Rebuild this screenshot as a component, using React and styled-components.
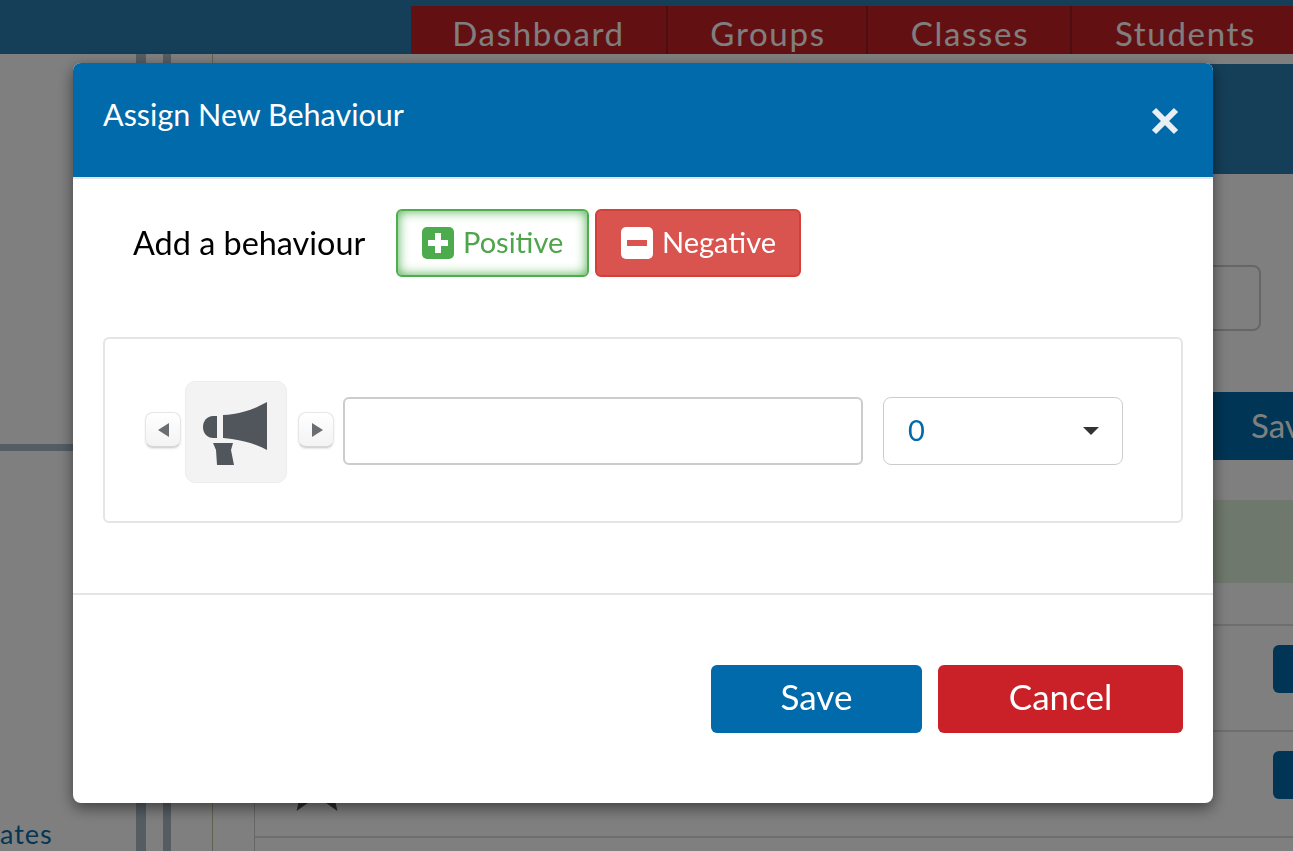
import React from 'react';
import styled, { createGlobalStyle } from 'styled-components';

const GlobalStyle = createGlobalStyle`
  * {
    box-sizing: border-box;
  }
  html,
  body {
    margin: 0;
    height: 100%;
    overflow: hidden;
    background: #fff;
    font-family: 'Lato', 'Liberation Sans', sans-serif;
  }
`;

const Page = styled.div`
  height: 851px;
  overflow: hidden;
  display: flex;
  flex-direction: column;
`;

const TopBar = styled.header`
  flex: none;
  height: 54px;
  padding: 6px 0 0 411px;
  background: #2a7eb2;
  display: flex;
`;

const Tab = styled.a`
  flex: none;
  width: ${({ $width }) => $width}px;
  height: 48px;
  padding-left: ${({ $shift }) => $shift || 0}px;
  background: #c62127;
  border-right: 2px solid #9c1a1f;
  color: #fff;
  font-size: 33px;
  line-height: 54px;
  letter-spacing: 1.7px;
  text-align: center;
`;

const Body = styled.div`
  flex: 1;
  min-height: 0;
  display: flex;
`;

const Sidebar = styled.aside`
  flex: none;
  width: 136px;
  padding-top: 390px;
  display: flex;
  flex-direction: column;
`;

const SidebarRule = styled.div`
  height: 7px;
  background: #aabbc6;
`;

const SidebarLink = styled.a`
  margin-top: auto;
  color: #0b6ea8;
  font-size: 27px;
  line-height: 34px;
  letter-spacing: 1px;
`;

const Rail = styled.div`
  flex: none;
  width: ${({ $width }) => $width}px;
  margin-right: ${({ $gap }) => $gap}px;
  background: #aabbc6;
`;

const Main = styled.main`
  flex: none;
  width: 1081px;
  border-left: 1px solid #b9c9a0;
  padding-top: 10px;
  display: flex;
  flex-direction: column;
`;

const SubHeader = styled.div`
  flex: none;
  height: 110px;
  background: #2a7eb2;
`;

const FormInput = styled.div`
  flex: none;
  height: 66px;
  margin: 91px 32px 0 0;
  border: 2px solid #ccc;
  border-radius: 8px;
`;

const SaveBar = styled.a`
  flex: none;
  height: 68px;
  margin-top: 61px;
  padding-left: 1038px;
  background: #006aab;
  color: #fff;
  font-size: 33px;
  line-height: 66px;
  white-space: nowrap;
`;

const Notice = styled.div`
  flex: none;
  height: 83px;
  margin-top: 40px;
  background: #dff0d8;
`;

const Table = styled.div`
  flex: 1;
  margin: 41px 0 0 41px;
  border-left: 1px solid #ccc;
`;

const Row = styled.div`
  height: 106px;
  border-top: 2px solid #ddd;
  padding: 10px 0 0 27px;
  display: flex;
  justify-content: space-between;
`;

const RowStar = styled.svg`
  width: 70px;
  height: 70px;
  margin-top: 2px;
  fill: #555;
`;

const RowButton = styled.div`
  width: 60px;
  height: 48px;
  margin: 9px -40px 0 0;
  border-radius: 6px;
  background: #006aab;
`;

const Overlay = styled.div`
  position: fixed;
  inset: 0;
  background: rgba(0, 0, 0, 0.5);
  display: flex;
  align-items: flex-start;
  padding: 63px 0 0 73px;
`;

const Modal = styled.section`
  width: 1140px;
  height: 740px;
  background: #fff;
  border-radius: 8px;
  box-shadow: 0 5px 15px rgba(0, 0, 0, 0.5);
  overflow: hidden;
  display: flex;
  flex-direction: column;
`;

const ModalHeader = styled.header`
  flex: none;
  height: 116px;
  padding: 0 33px 0 30px;
  background: #006aab;
  border-bottom: 2px solid #e5e5e5;
  display: flex;
  justify-content: space-between;
`;

const ModalTitle = styled.h4`
  margin: 31px 0 0;
  color: #fff;
  font-size: 30.5px;
  font-weight: 400;
  line-height: 40px;
`;

const CloseButton = styled.button`
  width: 30px;
  height: 30px;
  margin-top: 44px;
  padding: 0;
  border: 0;
  background: none;
  color: #e9eff3;
`;

const ModalBody = styled.div`
  flex: none;
  height: 416px;
  padding: 30px 30px 0;
  border-bottom: 2px solid #e5e5e5;
`;

const TypeRow = styled.div`
  height: 68px;
  padding-left: 30px;
  display: flex;
  align-items: center;
`;

const TypeLabel = styled.label`
  width: 263px;
  margin-bottom: 2px;
  color: #000;
  font-size: 32.4px;
`;

const TypeButton = styled.button`
  height: 68px;
  width: ${({ $width }) => $width}px;
  margin-right: 6px;
  padding: 0 0 0 24px;
  border: 2px solid ${({ $negative }) => ($negative ? '#d43f3a' : '#4cae4c')};
  border-radius: 6px;
  background: ${({ $negative }) => ($negative ? '#d9534f' : '#fff')};
  box-shadow: ${({ $negative }) => ($negative ? 'none' : 'inset 0 0 12px #4cae4c')};
  color: ${({ $negative }) => ($negative ? '#fff' : '#4ea54c')};
  font-family: inherit;
  font-size: 29px;
  line-height: 30px;
  display: flex;
  align-items: center;
  gap: 9px;
`;

const TypeText = styled.span`
  margin-bottom: 3px;
`;

const TypeIcon = styled.svg`
  flex: none;
  width: 32px;
  height: 32px;
`;

const Panel = styled.div`
  height: 186px;
  margin-top: 60px;
  padding: 42px 0 0 40px;
  border: 2px solid #e5e5e5;
  border-radius: 6px;
  display: flex;
  align-items: flex-start;
`;

const ArrowButton = styled.button`
  flex: none;
  width: 36px;
  height: 36px;
  margin-top: 31px;
  padding: 0 0 0 ${({ $next }) => ($next ? '3px' : '0')};
  border: 1px solid #e6e6e6;
  border-bottom: 2px solid #d6d6d6;
  border-radius: 8px;
  background: linear-gradient(#fff, #f3f3f3);
  box-shadow: 0 1px 2px rgba(0, 0, 0, 0.1);
  display: flex;
  align-items: center;
  justify-content: center;
`;

const ArrowGlyph = styled.span`
  width: 0;
  height: 0;
  border-top: 7px solid transparent;
  border-bottom: 7px solid transparent;
  border-right: ${({ $left }) => ($left ? '11px solid #6b6e70' : '0')};
  border-left: ${({ $left }) => ($left ? '0' : '11px solid #6b6e70')};
`;

const IconBox = styled.div`
  flex: none;
  width: 102px;
  height: 102px;
  margin: 0 11px 0 4px;
  border: 1px solid #ececec;
  border-radius: 10px;
  background: #f3f3f3;
`;

const MegaphoneIcon = styled.svg`
  display: block;
  width: 100px;
  height: 100px;
  fill: #50565c;
  filter: blur(0.4px);
`;

const BehaviourInput = styled.input`
  flex: none;
  width: 520px;
  height: 68px;
  margin: 16px 20px 0 9px;
  border: 2px solid #ccc;
  border-radius: 6px;
  background: #fff;
  font-family: inherit;
  font-size: 28px;
`;

const PointsSelect = styled.div`
  flex: none;
  width: 240px;
  height: 68px;
  margin-top: 16px;
  padding: 0 23px 0 24px;
  border: 1px solid #ccc;
  border-radius: 8px;
  color: #006aab;
  font-size: 29px;
  display: flex;
  align-items: center;
  justify-content: space-between;
`;

const PointsValue = styled.span`
  margin-bottom: 3px;
`;

const Caret = styled.span`
  width: 0;
  height: 0;
  border-top: 8px solid #333;
  border-left: 8px solid transparent;
  border-right: 8px solid transparent;
`;

const ModalFooter = styled.footer`
  flex: 1;
  padding: 70px 30px 0 0;
  display: flex;
  justify-content: flex-end;
  gap: 16px;
`;

const FooterButton = styled.button`
  width: ${({ $width }) => $width}px;
  height: 68px;
  padding: 0 0 6px;
  border: 0;
  border-radius: 6px;
  background: ${({ $danger }) => ($danger ? '#c92127' : '#006aab')};
  color: #fff;
  font-family: inherit;
  font-size: 35px;
`;

const starPoints = '12,1 15,9 23,9 17,14 19,23 12,18 5,23 7,14 1,9 9,9';

const App = () => (
  <>
    <GlobalStyle />
    <Page>
      <TopBar>
        <Tab $width={257}>Dashboard</Tab>
        <Tab $width={200} $shift={2}>Groups</Tab>
        <Tab $width={204} $shift={2}>Classes</Tab>
        <Tab $width={229}>Students</Tab>
      </TopBar>
      <Body>
        <Sidebar>
          <SidebarRule />
          <SidebarLink>ates</SidebarLink>
        </Sidebar>
        <Rail $width={10} $gap={17} />
        <Rail $width={8} $gap={41} />
        <Main>
          <SubHeader />
          <FormInput />
          <SaveBar>Save</SaveBar>
          <Notice />
          <Table>
            {[0, 1].map((row) => (
              <Row key={row}>
                <RowStar viewBox="0 0 24 24">
                  <polygon points={starPoints} />
                </RowStar>
                <RowButton />
              </Row>
            ))}
            <Row />
          </Table>
        </Main>
      </Body>
    </Page>
    <Overlay>
      <Modal>
        <ModalHeader>
          <ModalTitle>Assign New Behaviour</ModalTitle>
          <CloseButton aria-label="Close">
            <svg viewBox="0 0 30 30" width="30" height="30">
              <path d="M4 3 26 25M26 3 4 25" stroke="currentColor" strokeWidth="6" fill="none" />
            </svg>
          </CloseButton>
        </ModalHeader>
        <ModalBody>
          <TypeRow>
            <TypeLabel>Add a behaviour</TypeLabel>
            <TypeButton $width={193}>
              <TypeIcon viewBox="0 0 32 32">
                <rect width="32" height="32" rx="5" fill="#4cab4c" />
                <path d="M16 6v20M6 16h20" stroke="#fff" strokeWidth="6" />
              </TypeIcon>
              <TypeText>Positive</TypeText>
            </TypeButton>
            <TypeButton $width={206} $negative>
              <TypeIcon viewBox="0 0 32 32">
                <rect width="32" height="32" rx="5" fill="#fff" />
                <path d="M6 16h20" stroke="#d9534f" strokeWidth="6" />
              </TypeIcon>
              <TypeText>Negative</TypeText>
            </TypeButton>
          </TypeRow>
          <Panel>
            <ArrowButton aria-label="Previous icon">
              <ArrowGlyph $left />
            </ArrowButton>
            <IconBox>
              <MegaphoneIcon viewBox="0 0 100 100">
                <path d="M31 34H27C21 34 17 39 17 45C17 51 21 56 27 56H31Z" />
                <path d="M37 33C50 33 67 28 81 20V68C67 60 50 57 37 56Z" />
                <path d="M27 61H47L45 68 48 83H31L30 68Z" />
              </MegaphoneIcon>
            </IconBox>
            <ArrowButton $next aria-label="Next icon">
              <ArrowGlyph />
            </ArrowButton>
            <BehaviourInput type="text" />
            <PointsSelect>
              <PointsValue>0</PointsValue>
              <Caret />
            </PointsSelect>
          </Panel>
        </ModalBody>
        <ModalFooter>
          <FooterButton $width={211}>Save</FooterButton>
          <FooterButton $width={245} $danger>
            Cancel
          </FooterButton>
        </ModalFooter>
      </Modal>
    </Overlay>
  </>
);

export default App;
